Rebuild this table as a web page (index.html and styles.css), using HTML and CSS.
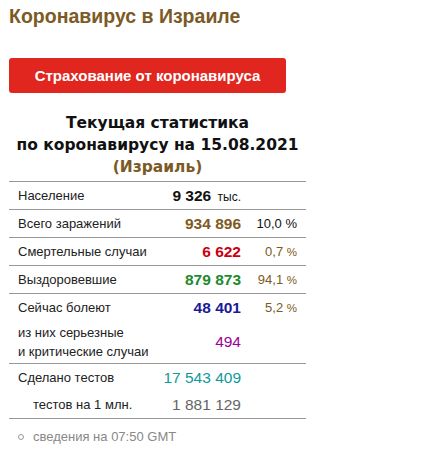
FILE: index.html
```html
<!DOCTYPE html>
<html lang="ru">
<head>
<meta charset="utf-8">
<title>Коронавирус в Израиле</title>
<link rel="stylesheet" href="styles.css">
</head>
<body>
<div class="page">
  <h1 class="title">Коронавирус в Израиле</h1>
  <a class="btn" href="#">Страхование от коронавируса</a>
  <div class="stats">
    <h2 class="stats-head">Текущая статистика<br>по коронавирусу на 15.08.2021<br><span class="country">(Израиль)</span></h2>
    <div class="table">
      <div class="row">
        <span class="label">Население</span>
        <span class="val bold dark">9 326 <span class="unit">тыс.</span></span>
        <span class="pct"></span>
      </div>
      <div class="row">
        <span class="label">Всего заражений</span>
        <span class="val bold brown">934 896</span>
        <span class="pct dark">10,0 %</span>
      </div>
      <div class="row">
        <span class="label">Смертельные случаи</span>
        <span class="val bold red">6 622</span>
        <span class="pct brown">0,7 <small>%</small></span>
      </div>
      <div class="row">
        <span class="label">Выздоровевшие</span>
        <span class="val bold green">879 873</span>
        <span class="pct brown">94,1 <small>%</small></span>
      </div>
      <div class="group">
        <div class="row plain">
          <span class="label">Сейчас болеют</span>
          <span class="val bold blue">48 401</span>
          <span class="pct brown">5,2 <small>%</small></span>
        </div>
        <div class="row plain tall">
          <span class="label two">из них серьезные<br>и критические случаи</span>
          <span class="val purple">494</span>
          <span class="pct"></span>
        </div>
      </div>
      <div class="group">
        <div class="row plain">
          <span class="label">Сделано тестов</span>
          <span class="val teal">17 543 409</span>
          <span class="pct"></span>
        </div>
        <div class="row plain">
          <span class="label indent">тестов на 1 млн.</span>
          <span class="val gray">1 881 129</span>
          <span class="pct"></span>
        </div>
      </div>
    </div>
    <p class="note"><span class="dot"></span>сведения на 07:50 GMT</p>
  </div>
</div>
</body>
</html>
```
FILE: styles.css
```css
html, body {
  margin: 0;
  padding: 0;
  background: #fff;
}
.page {
  padding: 0 0 0 9px;
  font-family: "Liberation Sans", Arial, sans-serif;
  color: #222;
}
.title {
  margin: 0;
  padding-top: 5px;
  font-size: 19.5px;
  line-height: 22px;
  font-weight: bold;
  color: #7b5a26;
  height: 53px;
}
.btn {
  display: flex;
  align-items: center;
  justify-content: center;
  width: 277px;
  height: 35px;
  background: #e0261f;
  border-radius: 3px;
  color: #fff;
  font-size: 15px;
  font-weight: bold;
  text-decoration: none;
}
.stats {
  width: 297px;
  padding-top: 19px;
}
.stats-head {
  margin: 0 0 3px;
  font-family: "DejaVu Sans", Verdana, sans-serif;
  font-size: 15.5px;
  line-height: 22px;
  font-weight: bold;
  text-align: center;
  color: #111;
}
.country {
  color: #7b5a26;
}
.table {
  border-top: 1px solid #999;
}
.row {
  display: grid;
  grid-template-columns: 1fr auto 56px;
  align-items: center;
  height: 27px;
  padding: 0 9px;
  border-bottom: 1px solid #999;
}
.row.plain {
  border-bottom: none;
}
.row.tall {
  height: 42px;
}
.group {
  border-bottom: 1px solid #999;
}
.label {
  font-size: 13px;
  color: #222;
  white-space: nowrap;
}
.label.two {
  line-height: 19px;
}
.label.indent {
  padding-left: 15px;
}
.val {
  text-align: right;
  font-size: 15.5px;
  white-space: nowrap;
}
.bold {
  font-weight: bold;
}
.unit {
  font-size: 12px;
  font-weight: normal;
  margin-left: 2px;
}
.pct {
  text-align: right;
  font-size: 13px;
  white-space: nowrap;
}
.pct small {
  font-size: 11.5px;
}
.dark { color: #111; }
.brown { color: #7d5a23; }
.red { color: #cc0011; }
.green { color: #1e8a2f; }
.blue { color: #1a1a99; }
.purple { color: #990099; }
.teal { color: #119999; }
.gray { color: #666; }
.note {
  margin: 10px 0 0;
  display: flex;
  align-items: center;
  font-size: 13px;
  color: #888;
}
.dot {
  width: 4px;
  height: 4px;
  border: 1px solid #999;
  border-radius: 50%;
  margin: 0 9px 0 9px;
}
```
